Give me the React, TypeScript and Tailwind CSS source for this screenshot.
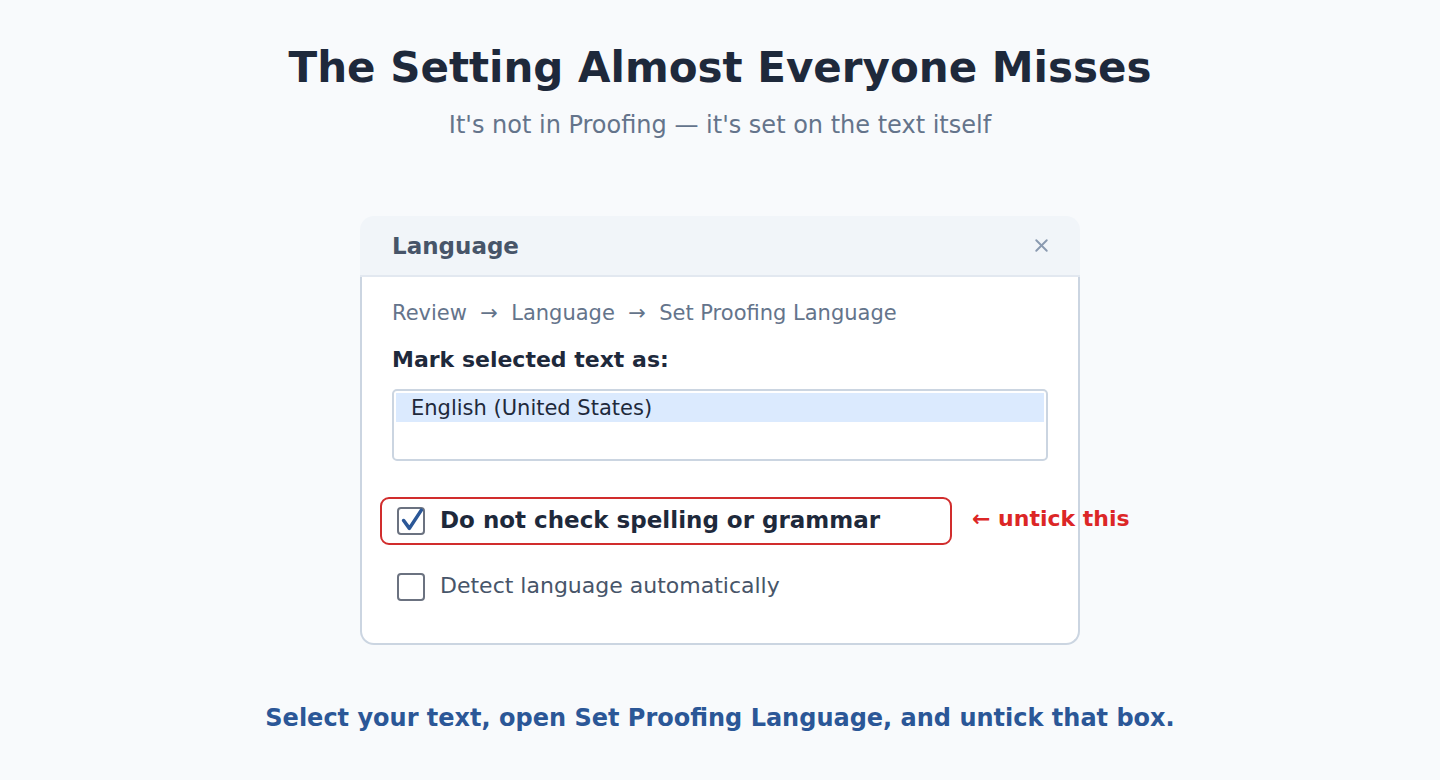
import { X } from "lucide-react";

const font = { fontFamily: '"DejaVu Sans", sans-serif' };

function CheckBox({ checked }: { checked?: boolean }) {
  return (
    <span className="relative flex h-[28px] w-[28px] shrink-0 items-center justify-center rounded-[4px] border-2 border-[#6b7280] bg-white">
      {checked ? (
        <svg viewBox="0 0 24 24" className="absolute -top-[3px] left-[1px] h-[27px] w-[25px]" fill="none">
          <path d="M3.5 13 L9 20.5 L20.5 3" stroke="#2b5797" strokeWidth="3.4" strokeLinecap="round" strokeLinejoin="round" />
        </svg>
      ) : null}
    </span>
  );
}

export default function App() {
  return (
    <div className="min-h-[780px] bg-[#f8fafc] pt-[44px] text-center" style={font}>
      <h1 className="text-[42px] font-bold leading-[48px] text-[#1e293b]">The Setting Almost Everyone Misses</h1>
      <p className="mt-[18px] text-[24px] leading-[30px] text-[#64748b]">It's not in Proofing — it's set on the text itself</p>

      <div className="mx-auto mt-[76px] w-[720px] text-left">
        <div className="flex h-[61px] items-center justify-between rounded-t-[14px] border-b-2 border-[#e2e8f0] bg-[#f1f5f9] pl-[32px] pr-[28px]">
          <span className="text-[23px] font-bold leading-[30px] text-[#475569]">Language</span>
          <X className="h-[21px] w-[21px] text-[#8a9ab0]" strokeWidth={2.2} />
        </div>
        <div className="rounded-b-[14px] border-2 border-t-0 border-[#cbd5e1] bg-white px-[30px] pb-[42px] pt-[22px]">
          <p className="text-[21px] leading-[28px] text-[#64748b]">Review&nbsp; →&nbsp; Language&nbsp; →&nbsp; Set Proofing Language</p>
          <p className="mt-[19px] text-[22px] font-bold leading-[28px] text-[#1e293b]">Mark selected text as:</p>
          <div className="mt-[15px] h-[72px] rounded-[5px] border-2 border-[#cbd5e1] p-[2px]">
            <div className="flex h-[29px] items-center bg-[#dbeafe] pl-[15px] text-[21px] leading-[28px] text-[#1e293b]">English (United States)</div>
          </div>
          <div className="relative mt-[36px] -ml-[12px] flex h-[48px] w-[572px] items-center gap-[15px] rounded-[9px] border-2 border-[#d12d2d] pl-[15px]">
            <CheckBox checked />
            <span className="-mt-[3px] text-[23px] font-bold leading-[30px] text-[#1e293b]">Do not check spelling or grammar</span>
            <span className="absolute left-[590px] top-[5px] whitespace-nowrap text-[22px] font-bold leading-[30px] text-[#dc2626]">← untick this</span>
          </div>
          <div className="mt-[28px] flex items-center gap-[15px] pl-[5px]">
            <CheckBox />
            <span className="-mt-[2px] text-[22px] leading-[30px] text-[#475569]">Detect language automatically</span>
          </div>
        </div>
      </div>

      <p className="mt-[58px] text-[24px] font-bold leading-[30px] text-[#2b5797]">Select your text, open Set Proofing Language, and untick that box.</p>
    </div>
  );
}
